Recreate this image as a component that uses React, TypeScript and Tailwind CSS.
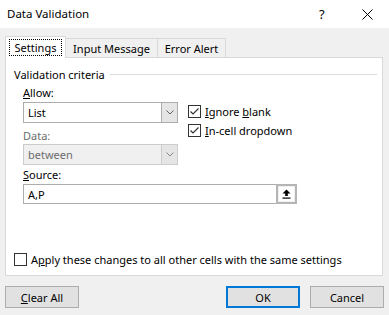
import React from 'react'

function Chevron({ color = '#606060' }: { color?: string }) {
  return (
    <svg width="8" height="5" viewBox="0 0 8 5" fill="none">
      <path d="M0.5 0.5 L4 4 L7.5 0.5" stroke={color} strokeWidth="1" />
    </svg>
  )
}

function Check() {
  return (
    <svg width="11" height="11" viewBox="0 0 11 11" fill="none">
      <path d="M1.5 5.5 L4 8 L9.5 2.5" stroke="#333" strokeWidth="1.2" />
    </svg>
  )
}

function CheckBox({ checked }: { checked?: boolean }) {
  return (
    <span className="w-[13px] h-[13px] border border-[#333] bg-white flex items-center justify-center shrink-0">
      {checked && <Check />}
    </span>
  )
}

function Combo({ value, disabled }: { value: string; disabled?: boolean }) {
  return (
    <div
      className={
        disabled
          ? 'w-[155px] h-[21px] border border-[#cccccc] bg-[#f0f0f0] flex items-stretch'
          : 'w-[155px] h-[21px] border border-[#adadad] bg-white flex items-stretch'
      }
    >
      <span
        className={
          disabled
            ? 'flex-1 pl-[4px] flex items-center text-[#6d6d6d]'
            : 'flex-1 pl-[4px] flex items-center'
        }
      >
        {value}
      </span>
      <span
        className={
          disabled
            ? 'w-[16px] bg-[#e5e5e5] border-l border-[#cccccc] flex items-center justify-center'
            : 'w-[16px] bg-[#e5e5e5] border-l border-[#adadad] flex items-center justify-center'
        }
      >
        <Chevron color={disabled ? '#8a8a8a' : '#606060'} />
      </span>
    </div>
  )
}

function Button({ children, primary }: { children: React.ReactNode; primary?: boolean }) {
  return (
    <button
      className={
        primary
          ? 'w-[74px] h-[22px] bg-[#e1e1e1] border-2 border-[#0078d7] flex items-center justify-center'
          : 'w-[74px] h-[22px] bg-[#e1e1e1] border border-[#adadad] flex items-center justify-center'
      }
    >
      {children}
    </button>
  )
}

export default function App() {
  return (
    <div className="w-[389px] h-[315px] bg-[#f0f0f0] text-[11px] text-black font-['Noto_Sans',sans-serif] leading-none flex flex-col">
      {/* Title bar */}
      <div className="h-[28px] bg-white flex items-center pl-[7px] shrink-0">
        <span className="flex-1 text-[11.5px]">Data Validation</span>
        <span className="w-[10px] text-[13px] mr-[33px]">?</span>
        <svg width="11" height="11" viewBox="0 0 11 11" className="mr-[16px]">
          <path d="M0.5 0.5 L10.5 10.5 M10.5 0.5 L0.5 10.5" stroke="#000" strokeWidth="1" />
        </svg>
      </div>

      {/* Tabs */}
      <div className="h-[29px] pl-[5px] flex items-end shrink-0">
        <div className="w-[61px] h-[22px] bg-white border border-b-0 border-[#d9d9d9] flex items-center justify-center relative z-10 -mb-px">
          <span className="px-[5px] py-[2px] border border-dotted border-black">Settings</span>
        </div>
        <div className="w-[92px] h-[19px] border border-l-0 border-b-0 border-[#d9d9d9] flex items-center justify-center">
          Input Message
        </div>
        <div className="w-[68px] h-[19px] border border-l-0 border-b-0 border-[#d9d9d9] flex items-center justify-center">
          Error Alert
        </div>
      </div>

      {/* Panel */}
      <div className="ml-[5px] w-[378px] h-[219px] bg-white border border-[#d9d9d9] shrink-0 flex flex-col">
        <div className="h-[28px] pt-[4px] pl-[8px] pr-[5px] flex items-center gap-[5px]">
          <span>Validation criteria</span>
          <span className="flex-1 h-px bg-[#dcdcdc]" />
        </div>

        <div className="pl-[17px] flex">
          <div className="flex flex-col">
            <span className="h-[13px] flex items-center">
              <span>
                <span className="underline">A</span>llow:
              </span>
            </span>
            <div className="mt-[3px]">
              <Combo value="List" />
            </div>
            <span className="mt-[6px] h-[13px] flex items-center text-[#6d6d6d]">Data:</span>
            <div className="mt-[2px]">
              <Combo value="between" disabled />
            </div>
            <span className="mt-[3px] h-[13px] flex items-center">
              <span>
                <span className="underline">S</span>ource:
              </span>
            </span>
          </div>

          <div className="ml-[10px] mt-[19px] flex flex-col gap-[6px]">
            <label className="flex items-center gap-[4px] h-[13px]">
              <CheckBox checked />
              <span>
                <span className="underline">I</span>gnore <span className="underline">b</span>lank
              </span>
            </label>
            <label className="flex items-center gap-[4px] h-[13px]">
              <CheckBox checked />
              <span>
                <span className="underline">I</span>n-cell dropdown
              </span>
            </label>
          </div>
        </div>

        <div className="pl-[17px] mt-[3px] flex">
          <div className="w-[274px] h-[20px] border border-[#adadad] bg-white flex items-stretch">
            <span className="flex-1 pl-[4px] flex items-center">A,P</span>
            <span className="w-[21px] bg-[#f0f0f0] border-2 border-[#b5b5b5] flex items-center justify-center -my-px -mr-px">
              <span className="w-[15px] h-[14px] bg-white flex items-center justify-center">
                <svg width="9" height="10" viewBox="0 0 9 10">
                  <path d="M4.5 0.5 L8.5 4.5 L5.8 4.5 L5.8 7 L3.2 7 L3.2 4.5 L0.5 4.5 Z" fill="#000" />
                  <rect x="0.5" y="8.5" width="8" height="1.2" fill="#000" />
                </svg>
              </span>
            </span>
          </div>
        </div>

        <div className="flex-1" />
        <label className="pl-[8px] mb-[9px] flex items-center gap-[4px] h-[13px]">
          <CheckBox />
          <span>
            A<span className="underline">p</span>ply these changes to all other cells with the same settings
          </span>
        </label>
      </div>

      {/* Buttons */}
      <div className="mt-[10px] px-[5px] flex items-center">
        <Button>
          <span className="underline">C</span>lear All
        </Button>
        <span className="flex-1" />
        <Button primary>OK</Button>
        <span className="w-[10px]" />
        <Button>Cancel</Button>
      </div>
    </div>
  )
}
